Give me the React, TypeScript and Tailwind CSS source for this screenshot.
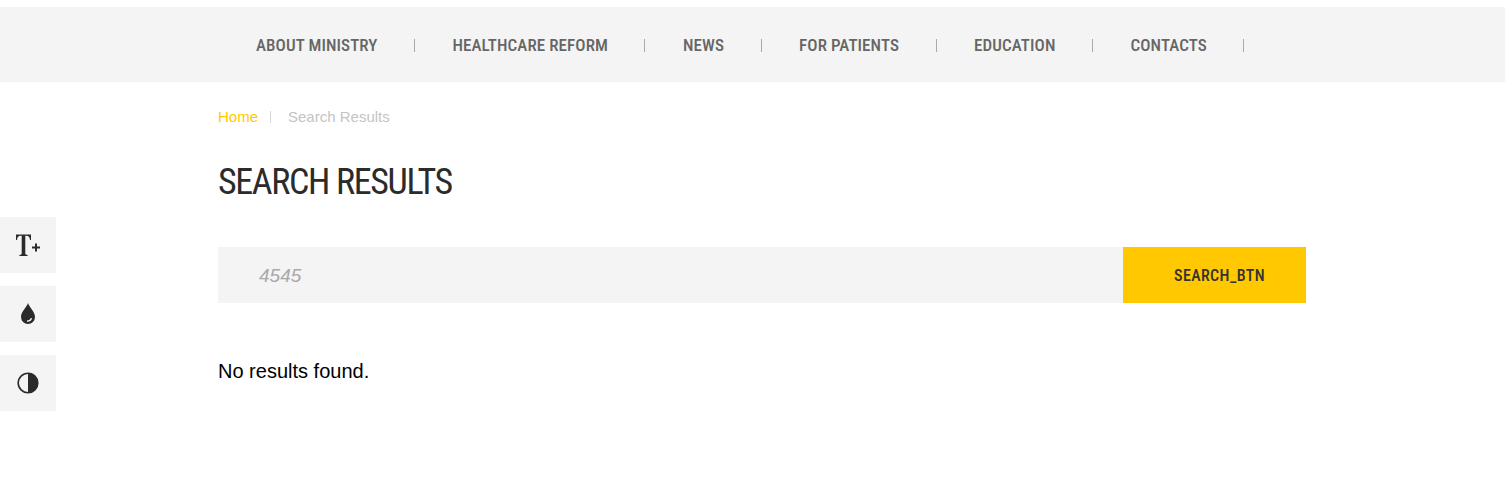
const navItems = [
  "ABOUT MINISTRY",
  "HEALTHCARE REFORM",
  "NEWS",
  "FOR PATIENTS",
  "EDUCATION",
  "CONTACTS",
];

const SideTools = () => (
  <div className="absolute left-0 top-[217px] flex flex-col gap-[13px]">
    <button className="flex h-14 w-14 items-center justify-center bg-[#f4f4f4]">
      <svg width="26" height="22" viewBox="0 0 26 22" fill="#2b2b2b">
        <path d="M1 .5H16V6H15C14.800 3.500 13.800 1.800 11.500 1.800H10.300V19.300C10.300 20.400 11 20.800 12.600 20.900V22H4.400V20.900C6 20.800 6.700 20.400 6.700 19.300V1.800H5.500C3.200 1.800 2.200 3.500 2 6H1Z" />
        <path d="M20 9.500h2v3h3v2h-3v3h-2v-3h-3v-2h3z" />
      </svg>
    </button>
    <button className="flex h-14 w-14 items-center justify-center bg-[#f4f4f4]">
      <svg width="16" height="22" viewBox="0 0 16 22">
        <path d="M8 0c1 4 7 8.500 7 14a7 7 0 0 1-14 0C1 8.500 7 4 8 0z" fill="#2b2b2b" />
        <path d="M7 18c2 .2 3.700-.8 4.500-2.800" fill="none" stroke="#f4f4f4" strokeWidth="1.300" />
      </svg>
    </button>
    <button className="flex h-14 w-14 items-center justify-center bg-[#f4f4f4]">
      <svg width="22" height="22" viewBox="0 0 22 22">
        <circle cx="11" cy="11" r="9.800" fill="none" stroke="#2b2b2b" strokeWidth="1.600" />
        <path d="M11 1a10 10 0 0 1 0 20z" fill="#2b2b2b" />
      </svg>
    </button>
  </div>
);

export default function App() {
  return (
    <div className="relative h-[484px] overflow-hidden bg-white pt-[7px] font-['Liberation_Sans',sans-serif]">
      <nav className="flex h-[75px] items-center bg-[#f4f4f4] pl-[256px] pt-[2px]">
        {navItems.map((item) => (
          <div key={item} className="mr-[37.5px] flex h-[13px] items-center border-r border-[#aaaaaa] pr-[36.5px]">
            <span className="font-['Roboto',sans-serif] font-stretch-condensed text-[17px] font-medium leading-none tracking-[0.1px] whitespace-nowrap text-[#666666]">
              {item}
            </span>
          </div>
        ))}
      </nav>

      <SideTools />

      <main className="ml-[218px] w-[1088px]">
        <div className="mt-[29px] flex h-3 items-center text-[15px]">
          <a className="flex h-3 items-center border-r border-[#d5d5d5] pr-3 text-[#ffc800]">Home</a>
          <span className="pl-[17px] text-[#c4c4c4]">Search Results</span>
        </div>
        <h1 className="mt-[34px] font-['Roboto',sans-serif] font-stretch-condensed text-[36px] font-normal leading-[50px] tracking-[-1.35px] whitespace-nowrap text-[#2b2b2b]">SEARCH RESULTS</h1>
        <div className="mt-[40px] flex h-14">
          <div className="flex flex-1 items-center bg-[#f4f4f4] pl-[41px] pt-[2px] text-[19px] italic text-[#a9a9a9]">4545</div>
          <button className="w-[183px] bg-[#ffc800] pl-[10px] pt-[2px] font-['Roboto',sans-serif] font-stretch-condensed text-[16px] font-medium tracking-[0.4px] text-[#333333]">
            SEARCH_BTN
          </button>
        </div>
        <p className="mt-[56px] text-[20px] leading-6 text-black">No results found.</p>
      </main>
    </div>
  );
}
